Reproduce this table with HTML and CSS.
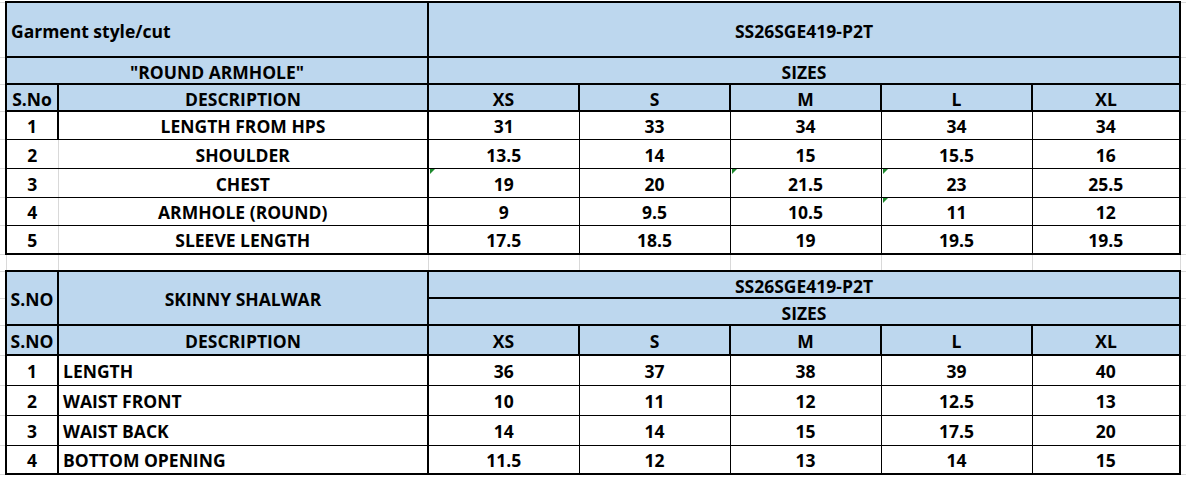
FILE: index.html
```html
<!DOCTYPE html>
<html lang="en">
<head>
<meta charset="utf-8">
<title>Size chart</title>
<link rel="stylesheet" href="styles.css">
</head>
<body>
<table class="sheet">
  <colgroup>
    <col class="w-m0"><col class="w-no"><col class="w-desc">
    <col class="w-sz"><col class="w-sz"><col class="w-sz"><col class="w-sz"><col class="w-xl">
    <col class="w-m1">
  </colgroup>
  <tbody>
    <tr class="r55">
      <td class="m"></td>
      <td class="h left" colspan="2">Garment style/cut</td>
      <td class="h" colspan="5">SS26SGE419-P2T</td>
      <td class="m"></td>
    </tr>
    <tr class="r27">
      <td class="m"></td>
      <td class="h" colspan="2">"ROUND ARMHOLE"</td>
      <td class="h" colspan="5">SIZES</td>
      <td class="m"></td>
    </tr>
    <tr class="r27">
      <td class="m"></td>
      <td class="h">S.No</td>
      <td class="h">DESCRIPTION</td>
      <td class="h">XS</td><td class="h">S</td><td class="h">M</td><td class="h">L</td><td class="h">XL</td>
      <td class="m"></td>
    </tr>
    <tr class="r28">
      <td class="m"></td>
      <td class="d no first">1</td>
      <td class="d desc first split">LENGTH FROM HPS</td>
      <td class="d v0 first">31</td><td class="d first">33</td><td class="d first">34</td><td class="d first">34</td><td class="d v4 first">34</td>
      <td class="m"></td>
    </tr>
    <tr class="r29">
      <td class="m"></td>
      <td class="d no grid">2</td>
      <td class="d desc nogrid">SHOULDER</td>
      <td class="d v0">13.5</td><td class="d">14</td><td class="d">15</td><td class="d">15.5</td><td class="d v4">16</td>
      <td class="m"></td>
    </tr>
    <tr class="r29">
      <td class="m"></td>
      <td class="d no grid">3</td>
      <td class="d desc nogrid">CHEST</td>
      <td class="d v0 flag">19</td><td class="d">20</td><td class="d flag">21.5</td><td class="d flag">23</td><td class="d v4">25.5</td>
      <td class="m"></td>
    </tr>
    <tr class="r28">
      <td class="m"></td>
      <td class="d no grid">4</td>
      <td class="d desc nogrid">ARMHOLE (ROUND)</td>
      <td class="d v0">9</td><td class="d">9.5</td><td class="d">10.5</td><td class="d flag">11</td><td class="d v4">12</td>
      <td class="m"></td>
    </tr>
    <tr class="r29">
      <td class="m"></td>
      <td class="d no grid last">5</td>
      <td class="d desc nogrid last">SLEEVE LENGTH</td>
      <td class="d v0 last">17.5</td><td class="d last">18.5</td><td class="d last">19</td><td class="d last">19.5</td><td class="d v4 last">19.5</td>
      <td class="m"></td>
    </tr>
    <tr class="r17 gap">
      <td class="m"></td>
      <td class="g"></td><td class="g"></td><td class="g"></td><td class="g"></td><td class="g"></td><td class="g"></td><td class="g"></td>
      <td class="m"></td>
    </tr>
    <tr class="r27">
      <td class="m"></td>
      <td class="h" rowspan="2">S.NO</td>
      <td class="h" rowspan="2">SKINNY SHALWAR</td>
      <td class="h" colspan="5">SS26SGE419-P2T</td>
      <td class="m"></td>
    </tr>
    <tr class="r27">
      <td class="m"></td>
      <td class="h" colspan="5">SIZES</td>
      <td class="m"></td>
    </tr>
    <tr class="r30">
      <td class="m"></td>
      <td class="h">S.NO</td>
      <td class="h">DESCRIPTION</td>
      <td class="h">XS</td><td class="h">S</td><td class="h">M</td><td class="h">L</td><td class="h">XL</td>
      <td class="m"></td>
    </tr>
    <tr class="r30">
      <td class="m"></td>
      <td class="d no first split">1</td>
      <td class="d desc left first split">LENGTH</td>
      <td class="d v0 first">36</td><td class="d first">37</td><td class="d first">38</td><td class="d first">39</td><td class="d v4 first">40</td>
      <td class="m"></td>
    </tr>
    <tr class="r30">
      <td class="m"></td>
      <td class="d no split">2</td>
      <td class="d desc left split">WAIST FRONT</td>
      <td class="d v0">10</td><td class="d">11</td><td class="d">12</td><td class="d">12.5</td><td class="d v4">13</td>
      <td class="m"></td>
    </tr>
    <tr class="r30">
      <td class="m"></td>
      <td class="d no split">3</td>
      <td class="d desc left split">WAIST BACK</td>
      <td class="d v0">14</td><td class="d">14</td><td class="d">15</td><td class="d">17.5</td><td class="d v4">20</td>
      <td class="m"></td>
    </tr>
    <tr class="r29">
      <td class="m"></td>
      <td class="d no split last">4</td>
      <td class="d desc left split last">BOTTOM OPENING</td>
      <td class="d v0 last">11.5</td><td class="d last">12</td><td class="d last">13</td><td class="d last">14</td><td class="d v4 last">15</td>
      <td class="m"></td>
    </tr>
  </tbody>
</table>
</body>
</html>
```
FILE: styles.css
```css
html, body {
  margin: 0;
  padding: 0;
  background: #ffffff;
}

.sheet {
  border-collapse: collapse;
  table-layout: fixed;
  width: 1186px;
  margin-top: 1px;
  font-family: "Open Sans", "Liberation Sans", sans-serif;
  font-weight: 700;
  font-size: 17.5px;
  color: #000000;
}

.w-m0 { width: 6px; }
.w-no { width: 52px; }
.w-desc { width: 370px; }
.w-sz { width: 151px; }
.w-xl { width: 148px; }
.w-m1 { width: 6px; }

.sheet td {
  padding: 2px 0 0 0;
  text-align: center;
  vertical-align: middle;
  white-space: nowrap;
  line-height: 20px;
}

.r55 { height: 55px; }
.r27 { height: 27px; }
.r28 { height: 28px; }
.r29 { height: 29px; }
.r30 { height: 30px; }
.r17 { height: 17px; }

/* margin gridlines */
.sheet td.m {
  border-top: 1px solid #d9d9d9;
  border-bottom: 1px solid #d9d9d9;
}

/* header cells */
.sheet td.h {
  background: #bdd7ee;
  border: 2px solid #000000;
}

.sheet td.left {
  text-align: left;
  padding-left: 4px;
}

/* data cells */
.sheet td.d {
  border: 1px solid #000000;
  position: relative;
}
.sheet td.no { border-left: 2px solid #000000; }
.sheet td.no.grid { border-right: 1px solid #d9d9d9; }
.sheet td.desc.nogrid { border-left: none; }
.sheet td.no.split { border-left: 2px solid #000000; }
.sheet td.desc.split { border-left: 2px solid #000000; }
.sheet td.desc { border-right: 2px solid #000000; }
.sheet td.v0 { border-left: 2px solid #000000; }
.sheet td.v4 { border-right: 2px solid #000000; }
.sheet td.first { border-top: 2px solid #000000; }
.sheet td.last { border-bottom: 2px solid #000000; }

/* gap row gridlines */
.sheet td.g {
  border-left: 1px solid #d9d9d9;
  border-right: 1px solid #d9d9d9;
}

/* excel "number stored as text" marker */
.sheet td.flag::before {
  content: "";
  position: absolute;
  left: 1px;
  top: 0;
  width: 0;
  height: 0;
  border-top: 5px solid #1e8a2e;
  border-right: 5px solid transparent;
}
```
